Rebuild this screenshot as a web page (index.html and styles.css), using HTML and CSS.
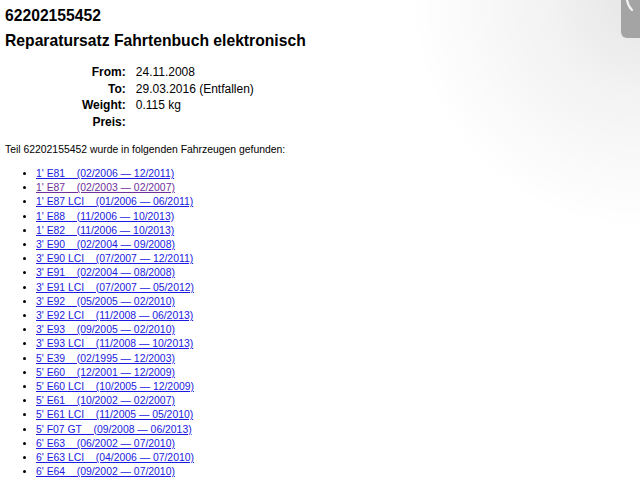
FILE: index.html
```html
<!DOCTYPE html>
<html lang="de">
<head>
<meta charset="utf-8">
<title>62202155452</title>
<link rel="stylesheet" href="styles.css">
</head>
<body>
<div class="shade"></div>
<div class="tab">
  <svg width="19" height="38" viewBox="0 0 19 38"><path d="M6 0 Q7 6 11 10" fill="none" stroke="#f2f2f2" stroke-width="2.2" stroke-linecap="round"/></svg>
</div>
<main class="page">
  <h1 class="num">62202155452</h1>
  <h2 class="title">Reparatursatz Fahrtenbuch elektronisch</h2>
  <table class="info">
    <tr><th>From:</th><td>24.11.2008</td></tr>
    <tr><th>To:</th><td>29.03.2016 (Entfallen)</td></tr>
    <tr><th>Weight:</th><td>0.115 kg</td></tr>
    <tr><th>Preis:</th><td></td></tr>
  </table>
  <p class="found">Teil 62202155452 wurde in folgenden Fahrzeugen gefunden:</p>
  <ul class="cars">
    <li><a href="#">1' E81&nbsp;&nbsp;&nbsp;&nbsp;(02/2006 &mdash; 12/2011)</a></li>
    <li><a class="visited" href="#">1' E87&nbsp;&nbsp;&nbsp;&nbsp;(02/2003 &mdash; 02/2007)</a></li>
    <li><a href="#">1' E87 LCI&nbsp;&nbsp;&nbsp;&nbsp;(01/2006 &mdash; 06/2011)</a></li>
    <li><a href="#">1' E88&nbsp;&nbsp;&nbsp;&nbsp;(11/2006 &mdash; 10/2013)</a></li>
    <li><a href="#">1' E82&nbsp;&nbsp;&nbsp;&nbsp;(11/2006 &mdash; 10/2013)</a></li>
    <li><a href="#">3' E90&nbsp;&nbsp;&nbsp;&nbsp;(02/2004 &mdash; 09/2008)</a></li>
    <li><a href="#">3' E90 LCI&nbsp;&nbsp;&nbsp;&nbsp;(07/2007 &mdash; 12/2011)</a></li>
    <li><a href="#">3' E91&nbsp;&nbsp;&nbsp;&nbsp;(02/2004 &mdash; 08/2008)</a></li>
    <li><a href="#">3' E91 LCI&nbsp;&nbsp;&nbsp;&nbsp;(07/2007 &mdash; 05/2012)</a></li>
    <li><a href="#">3' E92&nbsp;&nbsp;&nbsp;&nbsp;(05/2005 &mdash; 02/2010)</a></li>
    <li><a href="#">3' E92 LCI&nbsp;&nbsp;&nbsp;&nbsp;(11/2008 &mdash; 06/2013)</a></li>
    <li><a href="#">3' E93&nbsp;&nbsp;&nbsp;&nbsp;(09/2005 &mdash; 02/2010)</a></li>
    <li><a href="#">3' E93 LCI&nbsp;&nbsp;&nbsp;&nbsp;(11/2008 &mdash; 10/2013)</a></li>
    <li><a href="#">5' E39&nbsp;&nbsp;&nbsp;&nbsp;(02/1995 &mdash; 12/2003)</a></li>
    <li><a href="#">5' E60&nbsp;&nbsp;&nbsp;&nbsp;(12/2001 &mdash; 12/2009)</a></li>
    <li><a href="#">5' E60 LCI&nbsp;&nbsp;&nbsp;&nbsp;(10/2005 &mdash; 12/2009)</a></li>
    <li><a href="#">5' E61&nbsp;&nbsp;&nbsp;&nbsp;(10/2002 &mdash; 02/2007)</a></li>
    <li><a href="#">5' E61 LCI&nbsp;&nbsp;&nbsp;&nbsp;(11/2005 &mdash; 05/2010)</a></li>
    <li><a href="#">5' F07 GT&nbsp;&nbsp;&nbsp;&nbsp;(09/2008 &mdash; 06/2013)</a></li>
    <li><a href="#">6' E63&nbsp;&nbsp;&nbsp;&nbsp;(06/2002 &mdash; 07/2010)</a></li>
    <li><a href="#">6' E63 LCI&nbsp;&nbsp;&nbsp;&nbsp;(04/2006 &mdash; 07/2010)</a></li>
    <li><a href="#">6' E64&nbsp;&nbsp;&nbsp;&nbsp;(09/2002 &mdash; 07/2010)</a></li>
  </ul>
</main>
</body>
</html>
```

FILE: styles.css
```css
html, body {
  margin: 0;
  padding: 0;
  background: #ffffff;
  overflow: hidden;
}
body {
  font-family: "Liberation Sans", Arial, sans-serif;
  color: #000;
  width: 640px;
  height: 480px;
  position: relative;
}
.shade {
  position: absolute;
  top: 0;
  right: 0;
  width: 260px;
  height: 260px;
  background: radial-gradient(circle at 100% 0%, rgba(0,0,0,0.10) 0px, rgba(0,0,0,0.05) 90px, rgba(0,0,0,0.0) 230px);
  pointer-events: none;
}
.tab {
  position: absolute;
  top: 0;
  right: 0;
  width: 19px;
  height: 38px;
  background: #a4a4a4;
  border-bottom-left-radius: 6px;
}
.tab svg { display: block; }
.page {
  padding: 6px 5px 0 5px;
}
.num {
  margin: 0;
  font-size: 15.7px;
  font-weight: bold;
  line-height: 20px;
}
.title {
  margin: 4px 0 0 0;
  font-size: 15.7px;
  font-weight: bold;
  line-height: 22px;
}
.info {
  margin: 12px 0 0 77px;
  border-collapse: separate;
  border-spacing: 0;
  font-size: 12px;
}
.info th {
  text-align: right;
  font-weight: bold;
  padding: 0 10px 0 0;
  height: 16.5px;
  line-height: 16.5px;
}
.info td {
  padding: 0;
  line-height: 16.5px;
}
.found {
  margin: 13px 0 0 0;
  font-size: 10.4px;
  line-height: 13px;
}
.cars {
  margin: 11px 0 0 0;
  padding-left: 31px;
  font-size: 10.4px;
  line-height: 14.2px;
}
.cars a { color: #1a1ae0; }
.cars a.visited { color: #6e2f9c; }
```
